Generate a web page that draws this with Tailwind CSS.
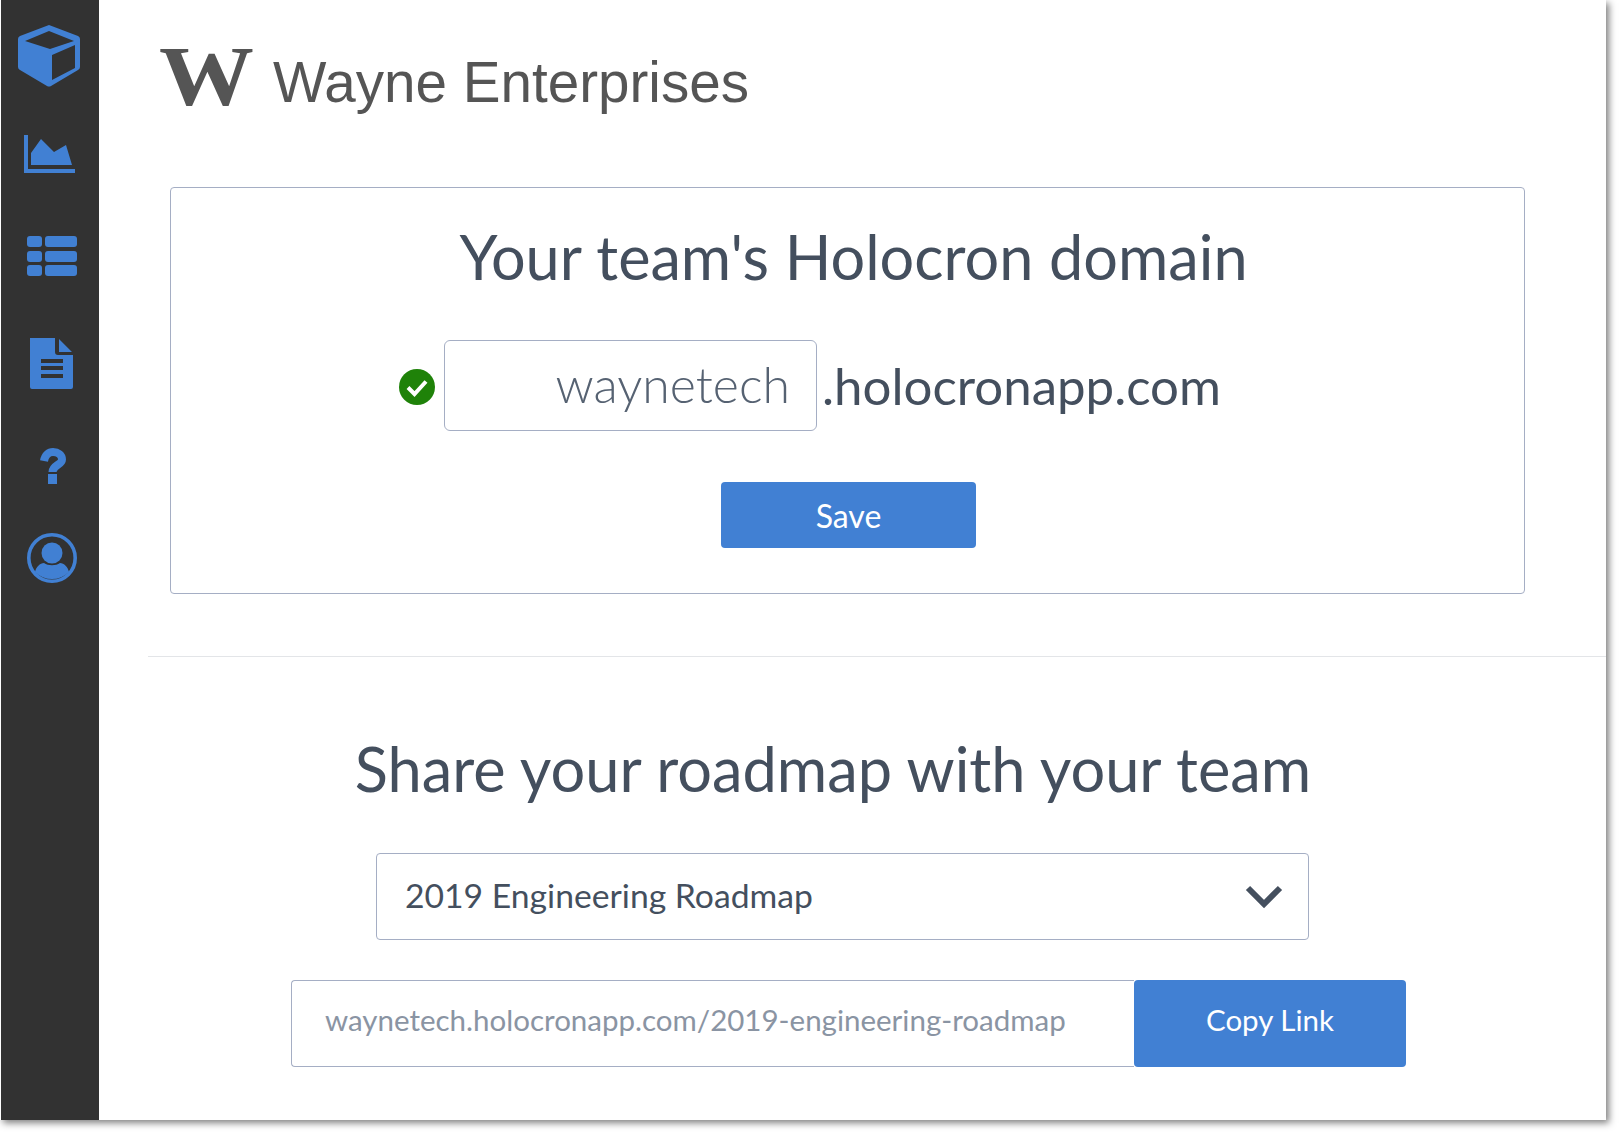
<!DOCTYPE html>
<html lang="en">
<head>
  <meta charset="UTF-8">
  <meta name="viewport" content="width=device-width, initial-scale=1.0">
  <title>Team settings</title>
  <script src="https://cdn.jsdelivr.net/npm/@tailwindcss/browser@4"></script>
</head>
<body class="bg-white min-h-screen font-['Lato',sans-serif]">
  <div class="w-[1606px] h-[1120px] flex bg-white shadow-[3px_3px_7px_rgba(0,0,0,0.5)]">

    <!-- Sidebar -->
    <aside class="w-[99px] pl-px shrink-0">
      <div class="h-full bg-[#323232] flex flex-col items-start text-[#4180d3]">
        <svg class="ml-[17px] mt-[25px]" width="62" height="62" viewBox="18 25 62 62">
          <path fill="#4180d3" d="M49 25 78 36q2 1 2 3V67q0 2-2 3L51 86q-2 1-4 0L20 70q-2-1-2-3V39q0-2 2-3Z"/>
          <path fill="#323232" d="M49 31 74 41 50 49 25 41ZM52 55 75 45V68L52 80Z"/>
        </svg>
        <svg class="ml-[23px] mt-[48px]" width="52" height="38" viewBox="24 135 52 38">
          <path fill="#4180d3" d="M24 135h4v34h47v4H24ZM31 165V153L41 139 54 152 66 145 72 165Z"/>
        </svg>
        <svg class="ml-[26px] mt-[63px]" width="51" height="40" viewBox="27 236 51 40" fill="#4180d3">
          <rect x="27" y="236" width="15" height="11" rx="3"/><rect x="45" y="236" width="32" height="11" rx="3"/>
          <rect x="27" y="251" width="15" height="11" rx="3"/><rect x="45" y="251" width="32" height="11" rx="3"/>
          <rect x="27" y="265" width="15" height="11" rx="3"/><rect x="45" y="265" width="32" height="11" rx="3"/>
        </svg>
        <svg class="ml-[29px] mt-[62px]" width="44" height="51" viewBox="30 338 44 51">
          <path fill="#4180d3" d="M30 338H55V352q0 3 3 3H73V387q0 2-2 2H32q-2 0-2-2ZM59 339 72 352H59Z"/>
          <path fill="#323232" d="M41 359h22v4H41ZM41 366h22v4H41ZM41 374h22v4H41Z"/>
        </svg>
        <svg class="ml-[38px] mt-[59px]" width="28" height="37" viewBox="39 448 28 37">
          <path fill="none" stroke="#4180d3" stroke-width="8" d="M44 461C45 455 49 452 53 452 58 452 62 455 62 459.5 62 465 52.500 465 52.500 472"/>
          <rect fill="#4180d3" x="48" y="474" width="9" height="10"/>
        </svg>
        <svg class="ml-[26px] mt-[48px]" width="50" height="50" viewBox="27 533 50 50">
          <circle cx="52" cy="558" r="23.200" fill="none" stroke="#4180d3" stroke-width="3.600"/>
          <circle cx="52" cy="553" r="10.500" fill="#4180d3"/>
          <path fill="#4180d3" d="M35 572C36 567 40 563 44 563 48 566 56 566 60 563 64 563 68 567 69 572A24 24 0 0 1 35 572Z"/>
        </svg>
      </div>
    </aside>

    <!-- Main -->
    <main class="flex-1 flex flex-col min-w-0">
      <header class="h-[187px] pl-[60px] pt-[41px] flex items-start text-[#555555]">
        <span class="font-['Liberation_Serif',serif] font-bold text-[84px] leading-[72px] w-[95px] origin-left scale-x-[1.13]">W</span>
        <span class="font-['Liberation_Sans',sans-serif] text-[56.600px] leading-[80px] ml-[19px] mt-[2px]">Wayne Enterprises</span>
      </header>

      <section class="ml-[71px] w-[1355px] h-[407px] border border-[#a5aec4] rounded-[4px] flex flex-col items-center text-[#444f5e]">
        <h1 class="text-[61.200px] leading-[72px] mt-[33px] ml-[12px] font-normal">Your team's Holocron domain</h1>
        <div class="flex items-center mt-[47px] ml-[-75px]">
          <svg class="mt-[2px]" width="36" height="36" viewBox="0 0 36 36">
            <circle cx="18" cy="18" r="18" fill="#1f8209"/>
            <path fill="none" stroke="#ffffff" stroke-width="4" d="M9 18.500 15.500 25 27 12.500"/>
          </svg>
          <div class="ml-[9px] w-[373px] h-[91px] border border-[#a5aec4] rounded-[6px] flex items-center justify-end pr-[26px] pb-[2px] text-[50px] font-light text-[#566272]">waynetech</div>
          <span class="ml-[5px] pt-[2px] text-[51px]">.holocronapp.com</span>
        </div>
        <button class="mt-[51px] ml-[2px] w-[255px] h-[66px] pt-[2px] bg-[#4180d3] rounded-[4px] text-white text-[32px]">Save</button>
      </section>

      <div class="mt-[62px] ml-[49px] border-t border-[#e3e5e8]"></div>

      <section class="flex flex-col items-center text-[#444f5e] pr-[30px]">
        <h2 class="text-[61.300px] leading-[72px] mt-[75px] ml-[-9px] font-normal">Share your roadmap with your team</h2>
        <div class="mt-[49px] ml-[10px] w-[933px] h-[87px] border border-[#a5aec4] rounded-[4px] flex items-center justify-between pl-[28px] pr-[25px] text-[33.700px]">
          <span class="pb-[2px]">2019 Engineering Roadmap</span>
          <svg width="38" height="24" viewBox="0 0 38 24"><path fill="none" stroke="#444f5e" stroke-width="6" d="M3 3 19 19 35 3"/></svg>
        </div>
        <div class="mt-[40px] ml-[22px] flex w-[1115px] h-[87px]">
          <div class="flex-1 border border-r-0 border-[#a5aec4] rounded-l-[4px] flex items-center pl-[33px] pb-[6px] text-[29.500px] text-[#8a94a3]">waynetech.holocronapp.com/2019-engineering-roadmap</div>
          <button class="w-[272px] pb-[6px] bg-[#4180d3] rounded-[4px] text-white text-[29.500px]">Copy Link</button>
        </div>
      </section>
    </main>
  </div>
</body>
</html>
